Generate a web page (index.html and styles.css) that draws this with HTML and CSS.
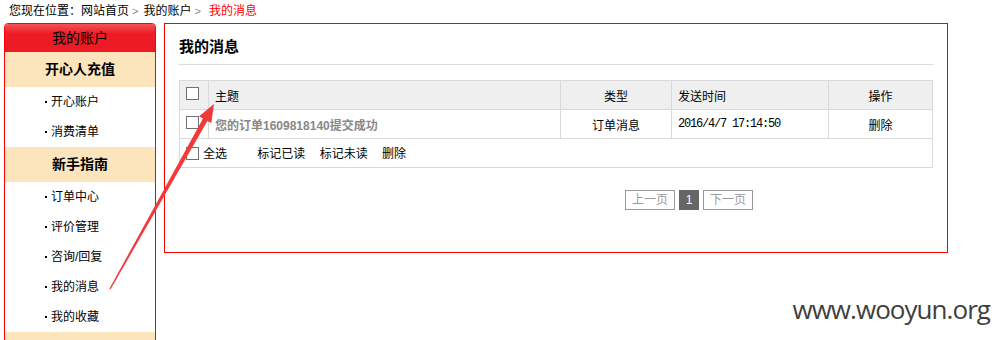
FILE: index.html
```html
<!DOCTYPE html>
<html lang="zh-CN">
<head>
    <meta charset="UTF-8">
    <meta name="viewport" content="width=device-width, initial-scale=1.0">
    <title>我的消息</title>
    <link rel="stylesheet" href="styles.css">
</head>
<body>
    <div class="crumb">
        您现在位置：<a href="#">网站首页</a><span class="sep">&gt;</span><a href="#">我的账户</a><span class="sep">&gt;</span><span class="cur">我的消息</span>
    </div>

    <div class="wrap">
        <div class="side">
            <div class="side-head">我的账户</div>
            <div class="side-title">开心人充值</div>
            <ul class="side-list">
                <li><a href="#">开心账户</a></li>
                <li><a href="#">消费清单</a></li>
            </ul>
            <div class="side-title">新手指南</div>
            <ul class="side-list">
                <li><a href="#">订单中心</a></li>
                <li><a href="#">评价管理</a></li>
                <li><a href="#">咨询/回复</a></li>
                <li><a href="#">我的消息</a></li>
                <li><a href="#">我的收藏</a></li>
            </ul>
            <div class="side-title"></div>
        </div>

        <div class="box">
            <h2 class="box-title">我的消息</h2>
            <table class="msg">
                <colgroup>
                    <col style="width:29px">
                    <col style="width:352px">
                    <col style="width:111px">
                    <col style="width:157px">
                    <col style="width:104px">
                </colgroup>
                <tr class="head">
                    <td class="c-check"><input type="checkbox" class="chk"></td>
                    <td>主题</td>
                    <td class="c-mid">类型</td>
                    <td>发送时间</td>
                    <td class="c-mid">操作</td>
                </tr>
                <tr>
                    <td class="c-check"><input type="checkbox" class="chk"></td>
                    <td class="subject">您的订单1609818140提交成功</td>
                    <td class="c-mid">订单消息</td>
                    <td class="time">2016/4/7 17:14:50</td>
                    <td class="c-mid"><a href="#">删除</a></td>
                </tr>
                <tr>
                    <td colspan="5" class="actions">
                        <input type="checkbox" class="chk"><span class="all">全选</span>
                        <a href="#" class="first">标记已读</a>
                        <a href="#">标记未读</a>
                        <a href="#">删除</a>
                    </td>
                </tr>
            </table>
            <div class="pager">
                <span class="pg">上一页</span>
                <span class="pg on">1</span>
                <span class="pg">下一页</span>
            </div>
        </div>
    </div>

    <svg class="arrow" width="999" height="340" viewBox="0 0 999 340">
        <polygon points="214,104 211.3,123.1 207.4,120.9 110.6,289.3 109.4,288.7 203,118.5 199.1,116.3" fill="#f23a3a"/>
    </svg>
    <div class="mark">www.wooyun.org</div>
</body>
</html>
```

FILE: styles.css
```css
body {
    margin: 0;
    padding: 0 4px;
    font-family: "Liberation Sans", "Noto Sans CJK SC", sans-serif;
    font-size: 12px;
    color: #000;
    background: #fff;
}
a {
    color: #000;
    text-decoration: none;
}
.crumb {
    height: 23px;
    line-height: 23px;
    padding-left: 5px;
}
.crumb .sep {
    color: #7d8ea3;
    font-size: 11px;
    margin: 0 5px 0 3px;
}
.crumb .cur {
    color: #f00;
    margin-left: 3px;
}
.wrap {
    display: flex;
    align-items: flex-start;
    gap: 8px;
}
.side {
    width: 150px;
    border: 1px solid #f00;
    border-radius: 4px 4px 0 0;
    overflow: hidden;
}
.side-head {
    height: 28px;
    line-height: 28px;
    text-align: center;
    font-size: 14px;
    background: linear-gradient(#f3525a, #ed1c24 35%);
}
.side-title {
    height: 35px;
    line-height: 35px;
    text-align: center;
    font-size: 14px;
    font-weight: bold;
    background: #fce5bd;
}
.side-list {
    list-style: none;
    margin: 0;
    padding: 0;
}
.side-list li {
    height: 30px;
    line-height: 30px;
    padding-left: 45px;
}
.side-list li::before {
    content: "";
    display: inline-block;
    width: 2px;
    height: 2px;
    background: #000;
    vertical-align: middle;
    margin: 0 4px 2px -5px;
}
.box {
    width: 784px;
    height: 230px;
    box-sizing: border-box;
    border: 1px solid #f00;
    padding: 6px 14px 0;
}
.box-title {
    margin: 0;
    height: 34px;
    line-height: 34px;
    font-size: 15px;
    font-weight: bold;
    border-bottom: 1px solid #ddd;
}
.msg {
    margin-top: 15px;
    width: 754px;
    table-layout: fixed;
    border-collapse: collapse;
}
.msg td {
    height: 28px;
    padding: 0 6px;
    border: 1px solid #d9d9d9;
    white-space: nowrap;
}
.msg .head td {
    background: #efefef;
}
.msg .c-check {
    padding: 0 0 0 6px;
}
.msg .c-mid {
    text-align: center;
}
.msg .subject {
    color: #888;
    font-weight: bold;
}
.msg .time {
    font-family: "Liberation Mono", monospace;
    letter-spacing: -1.2px;
}
.chk {
    appearance: none;
    -webkit-appearance: none;
    width: 13px;
    height: 13px;
    margin: 0;
    border: 1px solid #707070;
    background: #fff;
    vertical-align: middle;
    position: relative;
    top: -2px;
}
.msg .actions {
    padding-left: 6px;
}
.actions .all {
    margin-left: 4px;
}
.actions a {
    margin-left: 11px;
}
.actions a.first {
    margin-left: 27px;
}
.pager {
    display: flex;
    gap: 4px;
    margin-top: 22px;
    padding-left: 446px;
}
.pg {
    height: 18px;
    line-height: 18px;
    padding: 0 6px;
    border: 1px solid #999;
    color: #999;
}
.pg.on {
    width: 18px;
    padding: 0;
    text-align: center;
    background: #666;
    border-color: #666;
    color: #fff;
}
.arrow {
    position: absolute;
    left: 0;
    top: 0;
    pointer-events: none;
}
.mark {
    position: absolute;
    right: 9px;
    top: 296px;
    font-family: "Open Sans", sans-serif;
    font-size: 26px;
    line-height: 26px;
    letter-spacing: -0.95px;
    color: #3f3f3f;
}
```
